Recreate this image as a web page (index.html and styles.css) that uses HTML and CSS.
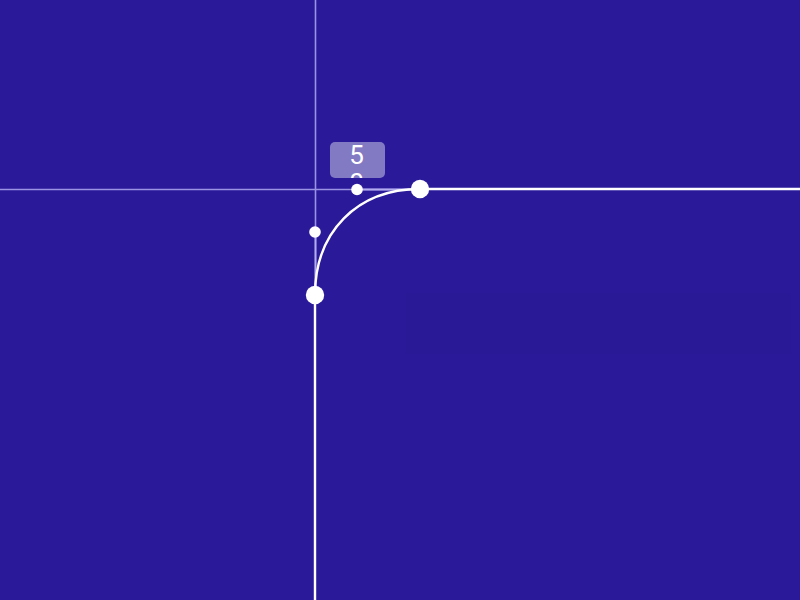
FILE: index.html
```html
<!DOCTYPE html>
<html>
<head>
<meta charset="utf-8">
<link rel="stylesheet" href="styles.css">
</head>
<body>
<div class="canvas">
  <svg class="scene" width="800" height="600" viewBox="0 0 800 600">
    <rect x="406" y="293" width="385" height="61" fill="#000" fill-opacity="0.025"/>
    <line x1="0" y1="189.5" x2="420" y2="189.5" stroke="#9a92e2" stroke-width="1.6"/>
    <line x1="315.5" y1="0" x2="315.5" y2="295" stroke="#9a92e2" stroke-width="1.6"/>
    <line x1="357" y1="189.5" x2="420" y2="189.5" stroke="#b3acf0" stroke-width="1.8"/>
    <line x1="315.5" y1="232" x2="315.5" y2="295" stroke="#b3acf0" stroke-width="1.8"/>
    <line x1="420" y1="189" x2="800" y2="189" stroke="#fff" stroke-width="2.4"/>
    <line x1="315" y1="295" x2="315" y2="600" stroke="#fff" stroke-width="2.4"/>
    <path d="M315 295 C315 232 357 189 420 189" fill="none" stroke="#fff" stroke-width="2.4"/>
    <circle cx="357" cy="189.5" r="5.8" fill="#fff"/>
    <circle cx="315" cy="232" r="5.8" fill="#fff"/>
    <circle cx="420" cy="189" r="9.2" fill="#fff"/>
    <circle cx="315" cy="295" r="9.2" fill="#fff"/>
  </svg>
  <div class="tip"><span class="tip-text">50</span></div>
</div>
</body>
</html>
```
FILE: styles.css
```css
html, body {
  margin: 0;
  padding: 0;
  background: #2a1a9a;
  overflow: hidden;
}
.canvas {
  position: relative;
  width: 800px;
  height: 600px;
  background: #2a1a9a;
}
.scene {
  position: absolute;
  left: 0;
  top: 0;
  display: block;
}
.tip {
  position: absolute;
  left: 330px;
  top: 142px;
  width: 55px;
  height: 36px;
  border-radius: 5px;
  background: rgba(255, 255, 255, 0.42);
  overflow: hidden;
  display: flex;
  justify-content: center;
}
.tip-text {
  display: block;
  width: 17px;
  margin-top: -1px;
  margin-right: 2px;
  font-family: Roboto, "Liberation Sans", sans-serif;
  font-size: 26px;
  line-height: 28px;
  color: #fff;
  text-align: center;
  word-break: break-all;
}
```
